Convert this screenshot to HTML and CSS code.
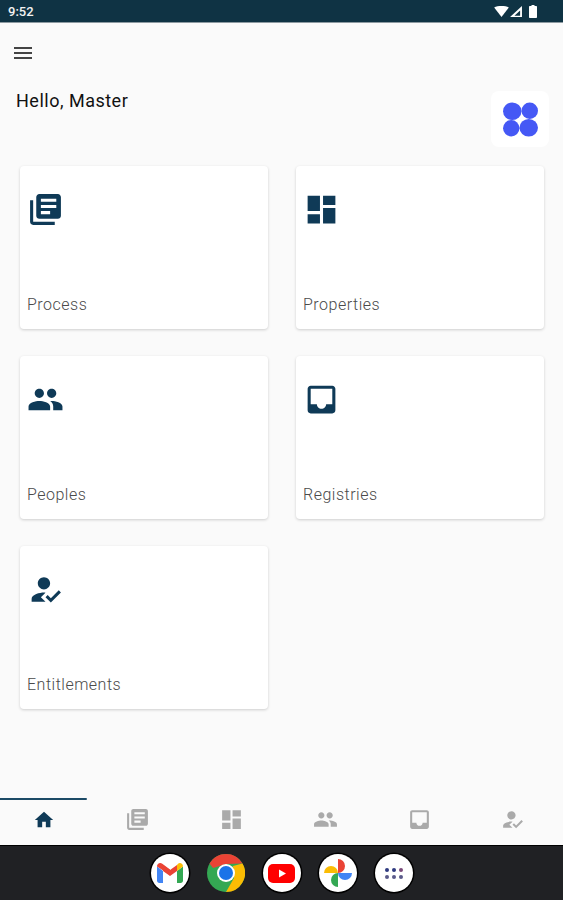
FILE: index.html
```html
<!DOCTYPE html>
<html lang="en">
<head>
  <meta charset="UTF-8" />
  <meta name="viewport" content="width=device-width, initial-scale=1.0"/>
  <title>Home</title>
  <link rel="stylesheet" href="styles.css">
</head>
<body>
  <div class="status-bar">
    <span class="clock">9:52</span>
    <div class="status-icons">
      <svg width="15" height="11" viewBox="0 0 16 12"><path d="M0 1.5C2 .5 5 0 8 0s6 .5 8 1.5L8 12z" fill="#fff"/></svg>
      <svg width="12" height="11" viewBox="0 0 13 12"><path fill-rule="evenodd" d="M13 0v12H0zM11 4.8 4.8 10.5H11z" fill="#fff"/></svg>
      <svg class="battery" width="8" height="13" viewBox="0 0 8 13"><path d="M2.5 0h3v1H7c.6 0 1 .4 1 1v10c0 .6-.4 1-1 1H1c-.6 0-1-.4-1-1V2c0-.6.4-1 1-1h1.500z" fill="#fff"/></svg>
    </div>
  </div>

  <div class="main">
    <div class="menu-btn">
      <svg width="24" height="24" viewBox="0 0 24 24"><path d="M3 18h18v-2H3v2zm0-5h18v-2H3v2zm0-7v2h18V6H3z" fill="#444"/></svg>
    </div>

    <div class="hello-row">
      <h1 class="hello">Hello, Master</h1>
      <div class="logo-tile">
        <svg width="37" height="37" viewBox="0 0 36 36">
          <ellipse cx="10" cy="10" rx="9" ry="8.500" fill="#4558f5"/>
          <ellipse cx="27" cy="9.500" rx="8" ry="8" fill="#4558f5"/>
          <ellipse cx="9" cy="26.500" rx="8" ry="8" fill="#4558f5"/>
          <ellipse cx="26" cy="26" rx="9" ry="8.500" fill="#4558f5"/>
        </svg>
      </div>
    </div>

    <div class="card-grid">
      <div class="card">
        <svg class="card-icon" viewBox="0 0 24 24"><path d="M4 6H2v14c0 1.100.9 2 2 2h14v-2H4V6zm16-4H8c-1.100 0-2 .9-2 2v12c0 1.100.9 2 2 2h12c1.100 0 2-.9 2-2V4c0-1.100-.9-2-2-2zm-1 9H9V9h10v2zm-4 4H9v-2h6v2zm4-8H9V5h10v2z"/></svg>
        <span class="card-label">Process</span>
      </div>
      <div class="card">
        <svg class="card-icon" viewBox="0 0 24 24"><path d="M3 13h8V3H3v10zm0 8h8v-6H3v6zm10 0h8V11h-8v10zm0-18v6h8V3h-8z"/></svg>
        <span class="card-label">Properties</span>
      </div>
      <div class="card">
        <svg class="card-icon" viewBox="0 0 24 24"><path d="M16 11c1.660 0 2.990-1.340 2.990-3S17.660 5 16 5c-1.660 0-3 1.340-3 3s1.340 3 3 3zm-8 0c1.660 0 2.990-1.340 2.990-3S9.660 5 8 5C6.340 5 5 6.340 5 8s1.340 3 3 3zm0 2c-2.330 0-7 1.170-7 3.500V19h14v-2.500c0-2.330-4.670-3.500-7-3.500zm8 0c-.29 0-.62.02-.97.05 1.160.84 1.970 1.970 1.970 3.450V19h6v-2.500c0-2.330-4.670-3.500-7-3.500z"/></svg>
        <span class="card-label">Peoples</span>
      </div>
      <div class="card">
        <svg class="card-icon" viewBox="0 0 24 24"><path d="M19 3H4.990c-1.110 0-1.980.89-1.980 2L3 19c0 1.100.88 2 1.990 2H19c1.100 0 2-.9 2-2V5c0-1.110-.9-2-2-2zm0 12h-4c0 1.660-1.350 3-3 3s-3-1.340-3-3H4.990V5H19v10z"/></svg>
        <span class="card-label">Registries</span>
      </div>
      <div class="card">
        <svg class="card-icon" viewBox="0 0 24 24"><path d="M9 17l3-2.940c-.39-.04-.68-.06-1-.06-2.670 0-8 1.340-8 4v2h9l-3-3zm2-5c2.210 0 4-1.790 4-4s-1.790-4-4-4-4 1.790-4 4 1.790 4 4 4m4.470 8.500L12 17l1.400-1.410 2.070 2.080 5.130-5.170 1.400 1.410z"/></svg>
        <span class="card-label">Entitlements</span>
      </div>
    </div>
  </div>

  <div class="bottom-nav">
    <div class="nav-indicator"></div>
    <div class="nav-row">
      <div class="nav-item active"><svg class="home-icon" viewBox="0 0 24 24"><path d="M10 20v-6h4v6h5v-8h3L12 3 2 12h3v8z"/></svg></div>
      <div class="nav-item"><svg viewBox="0 0 24 24"><path d="M4 6H2v14c0 1.100.9 2 2 2h14v-2H4V6zm16-4H8c-1.100 0-2 .9-2 2v12c0 1.100.9 2 2 2h12c1.100 0 2-.9 2-2V4c0-1.100-.9-2-2-2zm-1 9H9V9h10v2zm-4 4H9v-2h6v2zm4-8H9V5h10v2z"/></svg></div>
      <div class="nav-item"><svg viewBox="0 0 24 24"><path d="M3 13h8V3H3v10zm0 8h8v-6H3v6zm10 0h8V11h-8v10zm0-18v6h8V3h-8z"/></svg></div>
      <div class="nav-item"><svg viewBox="0 0 24 24"><path d="M16 11c1.660 0 2.990-1.340 2.990-3S17.660 5 16 5c-1.660 0-3 1.340-3 3s1.340 3 3 3zm-8 0c1.660 0 2.990-1.340 2.990-3S9.660 5 8 5C6.340 5 5 6.340 5 8s1.340 3 3 3zm0 2c-2.330 0-7 1.170-7 3.500V19h14v-2.500c0-2.330-4.670-3.500-7-3.500zm8 0c-.29 0-.62.02-.97.05 1.160.84 1.970 1.970 1.970 3.450V19h6v-2.500c0-2.330-4.670-3.500-7-3.500z"/></svg></div>
      <div class="nav-item"><svg viewBox="0 0 24 24"><path d="M19 3H4.990c-1.110 0-1.980.89-1.980 2L3 19c0 1.100.88 2 1.990 2H19c1.100 0 2-.9 2-2V5c0-1.110-.9-2-2-2zm0 12h-4c0 1.660-1.350 3-3 3s-3-1.340-3-3H4.990V5H19v10z"/></svg></div>
      <div class="nav-item"><svg viewBox="0 0 24 24"><path d="M9 17l3-2.940c-.39-.04-.68-.06-1-.06-2.670 0-8 1.340-8 4v2h9l-3-3zm2-5c2.210 0 4-1.790 4-4s-1.790-4-4-4-4 1.790-4 4 1.790 4 4 4m4.470 8.500L12 17l1.400-1.410 2.070 2.080 5.130-5.170 1.400 1.410z"/></svg></div>
    </div>
  </div>

  <div class="dock">
    <div class="dock-app">
      <!-- gmail -->
      <svg width="26" height="20" viewBox="0 0 26 20">
        <path d="M0 3.500V17.500C0 18.900 1 20 2.400 20H6V8z" fill="#4285f4"/>
        <path d="M20 8V20H23.600C25 20 26 18.900 26 17.500V3.500z" fill="#34a853"/>
        <path d="M0 3.500C0 .6 3 -1 5.300 .8L13 6.600 13 12 0 3.500z" fill="#ea4335"/>
        <path d="M6 2 13 7 20 2V8L13 13 6 8z" fill="#ea4335"/>
        <path d="M20 2 21 .8C23 -1 26 .6 26 3.500L20 8z" fill="#fbbc04"/>
      </svg>
    </div>
    <div class="dock-app chrome">
      <svg width="38" height="38" viewBox="0 0 38 38">
        <circle cx="19" cy="19" r="19" fill="#34a853"/>
        <path d="M19 0A19 19 0 0 1 35.500 9.500 L19 10 L6 14 L2.500 9.500A19 19 0 0 1 19 0z" fill="#ea4335"/>
        <path d="M35.500 9.500A19 19 0 0 1 19 38L27 24 26 12z" fill="#fbbc04"/>
        <circle cx="19" cy="19" r="9" fill="#fff"/>
        <circle cx="19" cy="19" r="7" fill="#1a73e8"/>
      </svg>
    </div>
    <div class="dock-app">
      <svg width="27" height="19" viewBox="0 0 27 19">
        <rect width="27" height="19" rx="5" fill="#f00"/>
        <path d="M11 5.500 18 9.500 11 13.500z" fill="#fff"/>
      </svg>
    </div>
    <div class="dock-app">
      <!-- photos pinwheel -->
      <svg width="28" height="28" viewBox="0 0 28 28">
        <path d="M0 14A7 7 0 0 1 14 14z" fill="#fbbc04"/>
        <path d="M14 0A7 7 0 0 1 14 14z" fill="#ea4335"/>
        <path d="M28 14A7 7 0 0 1 14 14z" fill="#4285f4"/>
        <path d="M14 28A7 7 0 0 1 14 14z" fill="#34a853"/>
      </svg>
    </div>
    <div class="dock-app">
      <div class="app-dots">
        <i class="dot-a"></i><i class="dot-a"></i><i class="dot-c"></i>
        <i class="dot-b"></i><i class="dot-b"></i><i class="dot-b"></i>
      </div>
    </div>
  </div>
</body>
</html>
```

FILE: styles.css
```css
body {
  margin: 0;
  width: 563px;
  height: 900px;
  display: flex;
  flex-direction: column;
  overflow: hidden;
  background-color: #fafafa;
  font-family: Roboto, sans-serif;
}

.status-bar {
  height: 22px;
  flex-shrink: 0;
  display: flex;
  align-items: center;
  justify-content: space-between;
  padding: 0 26px 0 8px;
  background-color: #0f3344;
  border-bottom: 1px solid #8d9aa1;
  box-sizing: content-box;
}

.clock {
  font-size: 13px;
  font-weight: 500;
  color: #f2f2f2;
}

.status-icons {
  display: flex;
  align-items: center;
  gap: 1px;
}

.battery {
  margin-left: 6px;
}

.main {
  flex: 1;
}

.menu-btn {
  padding: 18px 0 0 11px;
  height: 24px;
}

.menu-btn svg {
  display: block;
}

.hello-row {
  display: flex;
  justify-content: space-between;
  align-items: flex-start;
  padding: 8px 14px 0 16px;
  margin-top: 18px;
}

.hello {
  margin: 0;
  font-size: 18px;
  font-weight: 400;
  line-height: 20px;
  color: #111;
  letter-spacing: 0.5px;
}

.logo-tile {
  width: 58px;
  height: 56px;
  display: flex;
  align-items: center;
  justify-content: center;
  background: #fff;
  border-radius: 8px;
}

.card-grid {
  display: grid;
  grid-template-columns: 248px 248px;
  grid-auto-rows: 163px;
  gap: 27px 28px;
  padding: 19px 0 0 20px;
}

.card {
  display: flex;
  flex-direction: column;
  justify-content: space-between;
  padding: 25px 7px 14px;
  background: #fff;
  border-radius: 4px;
  box-shadow: 0 1px 3px rgba(0, 0, 0, 0.18);
}

.card-icon {
  width: 37px;
  height: 37px;
  fill: #0f3a57;
}

.card-label {
  font-size: 16px;
  line-height: 20px;
  font-weight: 300;
  letter-spacing: 0.5px;
  color: #4a4a4a;
}

.bottom-nav {
  height: 47px;
  flex-shrink: 0;
}

.nav-indicator {
  width: 87px;
  height: 2px;
  background-color: #1c4a66;
  border-radius: 0 1px 1px 0;
}

.nav-row {
  display: grid;
  grid-template-columns: repeat(6, 93.8px);
  margin-left: -3px;
  height: 45px;
}

.nav-item {
  display: flex;
  align-items: center;
  justify-content: center;
  padding-bottom: 6px;
}

.nav-item svg {
  width: 25px;
  height: 25px;
  fill: #aaa;
}

.nav-item.active svg {
  fill: #0f3a57;
}

.nav-item .home-icon {
  width: 22px;
  height: 22px;
}

.dock {
  height: 55px;
  flex-shrink: 0;
  display: flex;
  align-items: center;
  justify-content: center;
  gap: 18px;
  background-color: #202124;
  border-top: 1px solid #000;
  box-sizing: border-box;
}

.dock-app {
  width: 38px;
  height: 38px;
  display: flex;
  align-items: center;
  justify-content: center;
  background: #fff;
  border-radius: 50%;
  box-shadow: 0 0 0 1.5px #000;
}

.dock-app.chrome {
  background: none;
  box-shadow: none;
}

.app-dots {
  display: grid;
  grid-template-columns: repeat(3, 4px);
  gap: 3px;
}

.app-dots i {
  width: 4px;
  height: 4px;
  border-radius: 50%;
}

.dot-a {
  background-color: #2f3a80;
}

.dot-b {
  background-color: #5a5a8a;
}

.dot-c {
  background-color: #7a4a7a;
}
```
